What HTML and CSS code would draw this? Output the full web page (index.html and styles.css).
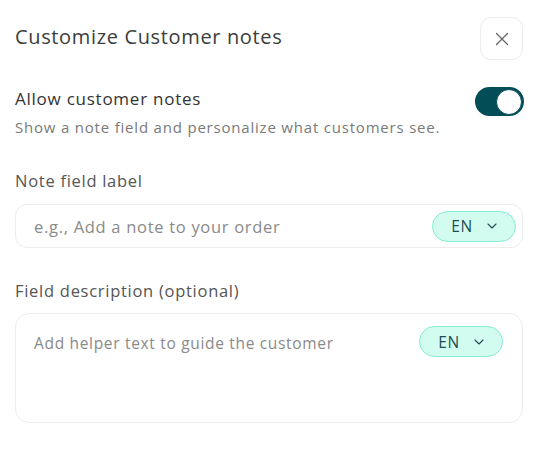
FILE: index.html
```html
<!DOCTYPE html>
<html>
<head>
<meta charset="utf-8">
<link rel="stylesheet" href="styles.css">
</head>
<body>
<div class="panel">
  <div class="header">
    <h1 class="title">Customize Customer notes</h1>
    <button class="close" aria-label="Close">
      <svg width="14" height="14" viewBox="0 0 14 14"><path d="M1.5 1.5 L12.5 12.5 M12.5 1.5 L1.5 12.5" stroke="#666" stroke-width="1.3" fill="none" stroke-linecap="round"/></svg>
    </button>
  </div>

  <div class="toggle-row">
    <div class="toggle-label">Allow customer notes</div>
    <div class="toggle"><span class="knob"></span></div>
  </div>
  <p class="hint">Show a note field and personalize what customers see.</p>

  <div class="field">
    <div class="label">Note field label</div>
    <div class="input">
      <span class="placeholder">e.g., Add a note to your order</span>
      <span class="lang">EN
        <svg width="10" height="6" viewBox="0 0 10 6"><path d="M1 1 L5 5 L9 1" stroke="#1d4e55" stroke-width="1.1" fill="none" stroke-linecap="round" stroke-linejoin="round"/></svg>
      </span>
    </div>
  </div>

  <div class="field field-desc">
    <div class="label">Field description (optional)</div>
    <div class="textarea">
      <span class="placeholder small">Add helper text to guide the customer</span>
      <span class="lang">EN
        <svg width="10" height="6" viewBox="0 0 10 6"><path d="M1 1 L5 5 L9 1" stroke="#1d4e55" stroke-width="1.1" fill="none" stroke-linecap="round" stroke-linejoin="round"/></svg>
      </span>
    </div>
  </div>
</div>
</body>
</html>
```

FILE: styles.css
```css
* { box-sizing: border-box; }
html, body { margin: 0; background: #fff; }
body {
  font-family: "Open Sans", "Liberation Sans", sans-serif;
  color: #333;
}
.panel {
  width: 540px;
  padding: 17px 17px 0 15px;
}
.header {
  display: flex;
  align-items: center;
  justify-content: space-between;
}
.title {
  margin: 0 0 5px;
  font-size: 20px;
  font-weight: 400;
  color: #3d3d3d;
  letter-spacing: 0.65px;
}
.close {
  width: 43px;
  height: 43px;
  border: 1px solid #ececec;
  border-radius: 11px;
  background: #fff;
  display: flex;
  align-items: center;
  justify-content: center;
  padding: 0;
}
.toggle-row {
  margin-top: 27px;
  display: flex;
  align-items: center;
  justify-content: space-between;
  height: 29px;
}
.toggle-label {
  font-size: 17px;
  color: #333;
  margin-top: -7px;
  letter-spacing: 0.75px;
}
.toggle {
  width: 49px;
  height: 29px;
  border-radius: 15px;
  background: #034d57;
  position: relative;
  margin-right: -1px;
}
.knob {
  position: absolute;
  right: 2px;
  top: 1.5px;
  width: 26px;
  height: 26px;
  border-radius: 50%;
  background: #fff;
  border: 1px solid #034d57;
}
.hint {
  margin: 1px 0 0;
  font-size: 15px;
  color: #7a7a7a;
  letter-spacing: 0.8px;
}
.field { margin-top: 33px; }
.field-desc { margin-top: 32px; }
.label {
  font-size: 16.5px;
  color: #555;
  line-height: 22px;
  letter-spacing: 0.72px;
}
.input {
  margin-top: 12px;
  height: 44px;
  border: 1px solid #ececec;
  border-radius: 12px;
  display: flex;
  align-items: center;
  justify-content: space-between;
  padding: 0 6px 0 18px;
}
.textarea {
  margin-top: 11px;
  height: 110px;
  border: 1px solid #ececec;
  border-radius: 14px;
  display: flex;
  align-items: flex-start;
  justify-content: space-between;
  padding: 12px 19px 0 18px;
}
.placeholder {
  font-size: 16.5px;
  color: #8a8a8a;
  letter-spacing: 0.7px;
}
.placeholder.small {
  font-size: 15.5px;
  margin-top: 6px;
  letter-spacing: 0.68px;
}
.lang {
  width: 84px;
  height: 31px;
  border-radius: 16px;
  background: #d2fcef;
  border: 1px solid #84edd2;
  display: flex;
  align-items: center;
  justify-content: center;
  gap: 14px;
  font-size: 15.5px;
  color: #1d4e55;
  letter-spacing: 0.5px;
}
```
